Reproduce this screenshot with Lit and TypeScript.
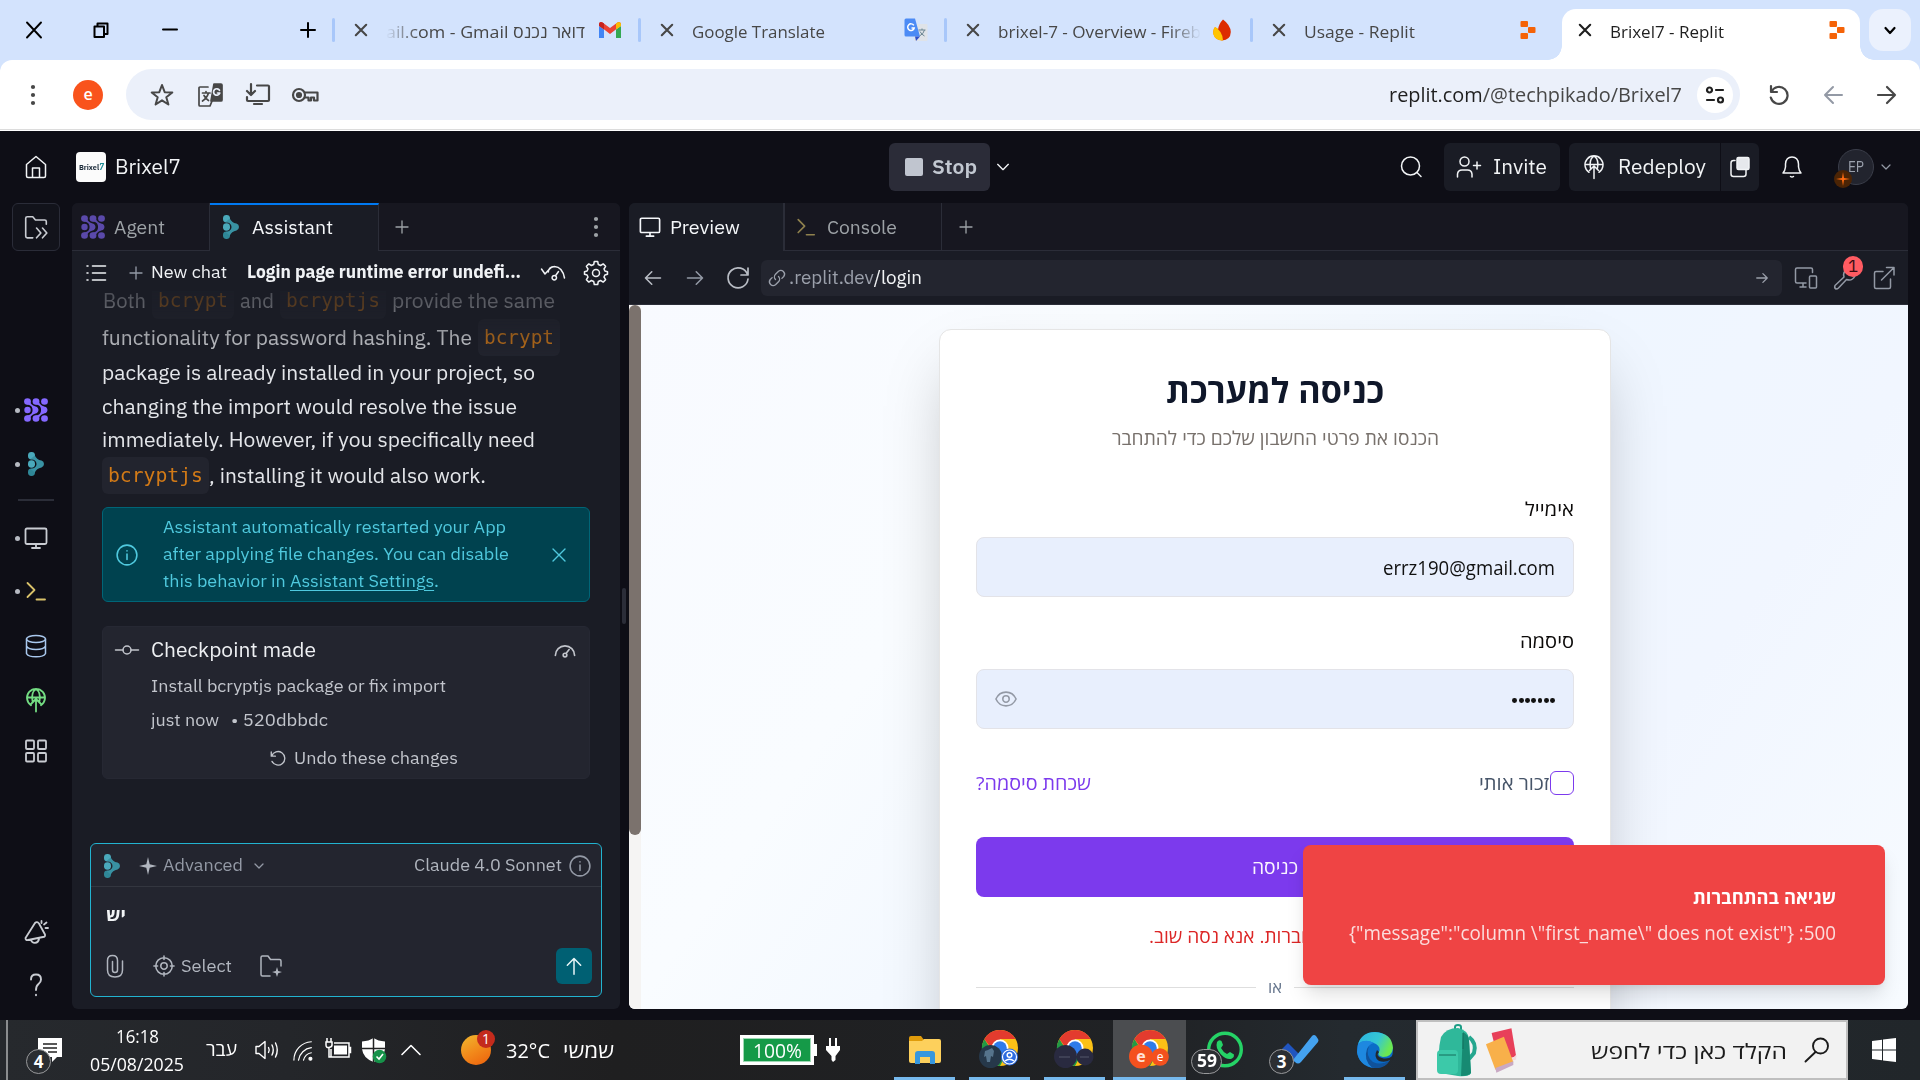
import { LitElement, html, svg, css, unsafeCSS } from "lit";
import { customElement, property } from "lit/decorators.js";

/** Text condensed or expanded horizontally to a given width. */
@customElement("fit-text")
class FitText extends LitElement {
  @property({ type: Number }) w = 0;
  @property({ type: Boolean, reflect: true }) rtl = false;
  static styles = css`
    :host { display: inline-flex; flex: none; direction: ltr; white-space: pre; line-height: 1.3; }
    span { display: inline-block; flex: none; transform-origin: 0 50%; }
    :host([rtl]) span { direction: rtl; }
  `;
  render() {
    return html`<span><slot></slot></span>`;
  }
  firstUpdated() {
    this.fit();
    document.fonts.ready.then(() => this.fit());
  }
  fit() {
    const span = this.renderRoot.querySelector("span") as HTMLElement;
    span.style.transform = "none";
    const natural = span.getBoundingClientRect().width;
    if (natural > 0 && this.w > 0) {
      this.style.width = `${this.w}px`;
      span.style.transform = `scaleX(${this.w / natural})`;
    }
  }
}

const spacing = unsafeCSS(
  Array.from({ length: 400 }, (_, i) => `.ml${i}{margin-left:${i}px}.mt${i}{margin-top:${i}px}`).join("")
);

const ico = (size: number, body: unknown, cls = "", stroke = 1.5, box = 24) => html`<svg
  class="ic ${cls}" width=${size} height=${size} viewBox="0 0 ${box} ${box}" fill="none"
  stroke="currentColor" stroke-width=${stroke} stroke-linecap="round" stroke-linejoin="round">${body}</svg>`;

const P = (d: string) => svg`<path d=${d}/>`;

const plus = P("M12 3V21M3 12H21");
const chevron = P("M4 8L12 16L20 8");
const kebab = svg`<g fill="currentColor" stroke="none"><circle cx="12" cy="4" r="2.1"/><circle cx="12" cy="12" r="2.1"/><circle cx="12" cy="20" r="2.1"/></g>`;
const monitor = P("M3 2.5H21Q22.5 2.5 22.5 4V16.5Q22.5 18 21 18H3Q1.5 18 1.5 16.5V4Q1.5 2.5 3 2.5ZM12 18V22M8 22H16");
const prompt = P("M3.5 4L10.5 11L3.5 18M12.5 20.5H21");
const gauge = P("M1.5 18A10.5 10.5 0 0 1 22.5 18M13.3 15.5L16.5 11.5M12 15.5A2 2 0 1 1 12 19.500A2 2 0 1 1 12 15.500");
const infoI = svg`<circle cx="12" cy="12" r="10.800"/><path d="M12 11V17M12 7.400V7.600"/>`;
const globeUp = P("M12 23.500V11M7.500 15.500L12 11L16.500 15.500M7 17.300A9 9 0 1 1 17 17.300M3 9.500H21M8.500 13C7.500 8 9 3 12 .8C15 3 16.500 8 15.500 13");
const arrowR = P("M3 12H21M13.500 4.500L21 12L13.500 19.500");
const arrowL = P("M21 12H3M10.500 4.500L3 12L10.500 19.500");
const undo = P("M3 4V9.500H8.500M3.600 9.300A9 9 0 1 1 4 16.500");
const agentI = svg`
  <g stroke="none" fill="#8468ff">
  <ellipse cx="3.500" cy="3.500" rx="3.400" ry="3.300"/><ellipse cx="12" cy="3.500" rx="3.400" ry="3.300"/><ellipse cx="20.500" cy="3.500" rx="3.400" ry="3.300"/>
  <ellipse cx="3.500" cy="12" rx="3.200" ry="3.200"/>
  <ellipse cx="3.500" cy="20.500" rx="3.400" ry="3.300"/><ellipse cx="12" cy="20.500" rx="3.400" ry="3.300"/><ellipse cx="20.500" cy="20.500" rx="3.400" ry="3.300"/></g>
  <g fill="#8468ff" stroke="none"><path d="M2 6C6 7 8 8 8.500 11V13C8 16 6 17 2 18L6 19.500C8 16.500 10 16 13 15Q16 12 13 9C10 8 8 7.500 6 4.500Z"/>
  <path d="M11 6C15 7 16.500 8 17 11V13C16.500 16 15 17 11 18L15 19.500C17 16.500 18.500 16 22 15Q25 12 22 9C18.500 8 17 7.500 15 4.500Z"/></g>`;
const assistI = svg`
  <g fill="#4aa9bb" stroke="none"><rect x="4" y="0" width="7" height="7.500" rx="3.400"/><rect x="4" y="8.300" width="7" height="7.400" rx="3.400"/><rect x="4" y="16.500" width="7" height="7.500" rx="3.400" fill="#2f8797"/>
  <path fill="#3992a3" d="M10.800 3.500C12 6 14 8 17.500 8.600Q20 9.500 20 12T17.500 15.400C14 16 12 18 10.800 20.500L6.500 17C10 16.500 12.500 15 12.500 12S10 7.500 6.500 7Z"/></g>`;

const replitI = html`<svg class="ic" width="24" height="24" viewBox="0 0 24 24" fill="#f56308"><rect x="4.500" y="3" width="7.500" height="6" rx="1"/><rect x="12" y="9" width="7.500" height="6" rx="1"/><rect x="4.500" y="15" width="7.500" height="6" rx="1"/></svg>`;
const gmailI = html`<svg class="ic" width="24" height="24" viewBox="0 0 24 24"><path fill="#4285f4" d="M1 20V8l5 3.500V20z"/><path fill="#34a853" d="M23 20V8l-5 3.500V20z"/><path fill="#ea4335" d="M1 7.500V6q.5-3 3.500-1.600L12 10l7.500-5.600Q22 3.200 23 6v1.500L12 16z"/><path fill="#fbbc04" d="M18 11.500V5.500l1.500-1.100Q22.500 3.200 23 6v2z"/><path fill="#c5221f" d="M6 11.500V5.500L4.500 4.400Q1.500 3.200 1 6v2z"/></svg>`;
const gtransI = html`<svg class="ic" width="24" height="24" viewBox="0 0 24 24"><rect x="10" y="6" width="13.500" height="17" rx="1" fill="#dfe3e8"/><path d="M14.500 12h7M18 10.500V12M20.500 12q-1 4-5 6M16 13.500q1.500 3 4.500 4.500" stroke="#6b8591" fill="none"/><path fill="#4c8bf5" d="M2 .5h9l5 18H2q-1.500 0-1.500-1.500V2Q.5.5 2 .5z"/><path fill="#3050c8" d="M11 18.500h5L12 23z"/><path d="M9.800 7.400A3.300 3.300 0 1 0 10.200 10H7.500" stroke="#fff" stroke-width="1.500" fill="none"/></svg>`;
const fireI = html`<svg class="ic" width="24" height="24" viewBox="0 0 24 24"><path fill="#ff9100" d="M5 9Q2.500 12 3.300 16 5 22 12 22.500L10 12z"/><path fill="#dd2c00" d="M13 1.500Q20.500 7 20.800 14 20.500 22 12 22.500 7 20 8 12 8.500 6 13 1.500z"/><path fill="#ffc400" d="M5 9q7.500 4 8 13.400Q5 22.500 3.300 16 2.700 12 5 9z"/></svg>`;

const chromeI = (a: unknown) => html`<svg class="ic" width="44" height="44" viewBox="-22 -20 44 44">
  <circle r="18" fill="#fbc116"/><path fill="#e33b2e" d="M-15.600-9A18 18 0 0 1 15.600-9L0-9 -4 0z"/><path fill="#229a45" d="M-15.600-9A18 18 0 0 0 0 18L7.500 4-7.500 4z"/><path fill="#e33b2e" d="M-15.600-9L0-9-7 3z"/>
  <circle r="8.500" fill="#fff"/><circle r="6.800" fill="#2f7bea"/>${a}</svg>`;

@customElement("app-root")
class AppRoot extends LitElement {
  static styles = [
    spacing,
    css`
      :host { display: block; width: 1920px; height: 1080px; overflow: hidden; background: #0e0e16; color: #f0f2f5;
        font-family: "IBM Plex Sans", "Noto Sans", "Open Sans", sans-serif; }
      * { box-sizing: border-box; }
      .row, .row > .grp { display: flex; align-items: center; }
      .col { display: flex; flex-direction: column; }
      .ic { display: block; flex: none; overflow: visible; }
      .push { margin-left: auto; }

      /* browser tabs */
      .strip { height: 60px; background: #d3e3fd; padding-left: 26px; color: #000; font: 17px "Open Sans", sans-serif; }
      .sep { width: 3px; height: 24px; background: #a8c7fa; border-radius: 2px; flex: none; }
      .sep.off { background: none; }
      .tab { width: 303px; height: 60px; padding: 0 16px 0 19px; color: #474747; flex: none; }
      .tab fit-text { margin: 5px 0 0 18px; }
      .tab .ic:last-child { margin-left: auto; }
      .fl { -webkit-mask-image: linear-gradient(90deg, transparent, #000 32px); mask-image: linear-gradient(90deg, transparent, #000 32px); }
      .fr { -webkit-mask-image: linear-gradient(270deg, transparent, #000 32px); mask-image: linear-gradient(270deg, transparent, #000 32px); }
      .tab.on { position: relative; width: 298px; height: 51px; margin: 9px 0 0 3px; background: #fff; border-radius: 14px 14px 0 0; padding: 0 11px 9px 16px; color: #1f1f1f; }
      .tab.on::before, .tab.on::after { content: ""; position: absolute; bottom: 0; width: 14px; height: 14px; }
      .tab.on::before { left: -14px; background: radial-gradient(circle at 0 0, transparent 13.500px, #fff 14px); }
      .tab.on::after { right: -14px; background: radial-gradient(circle at 100% 0, transparent 13.500px, #fff 14px); }
      .drop { width: 42px; height: 42px; border-radius: 14px; background: #ebf1fd; display: grid; place-items: center; margin-left: 9px; }

      /* browser toolbar */
      .barwrap { background: #d3e3fd; }
      .bar { height: 71px; background: #fff; border-radius: 12px 12px 0 0; color: #474747; font-family: "Open Sans", sans-serif; padding-bottom: 1px; border-bottom: 1px solid #fff; box-shadow: inset 0 -1px #dcdcdc; }
      .me { width: 30px; height: 30px; border-radius: 50%; background: #f9531c; color: #fff; display: grid; place-items: center; font-size: 16px; line-height: 1; font-weight: 600; padding-bottom: 2px; }
      .omni { width: 1614px; height: 51px; border-radius: 26px; background: #ebf0fa; padding-right: 7px; font-size: 20px; }
      .omni b { color: #1f1f1f; font-weight: 400; }
      .tune { width: 36px; height: 36px; border-radius: 50%; background: #fff; display: grid; place-items: center; color: #1f1f1f; }

      /* workspace header */
      .head { height: 72px; font-size: 20.500px; color: #f2f4f6; }
      .logo { width: 30px; height: 30px; border-radius: 4px; background: #fbfbfb; color: #1c2b3a; display: grid; place-items: center; font-weight: 800; font-size: 8px; }
      .logo i { color: #1d8c95; font-size: 9px; }
      .stop { margin-left: 708px; width: 101px; height: 48px; border-radius: 6px; background: #2b2c38; padding-left: 16px; color: #c2c8d1; font-weight: 600; }
      .sq { width: 18px; height: 18px; border-radius: 2px; background: #c0c5cf; }
      .hb { height: 48px; background: #1a1c25; border-radius: 6px; }
      .hb.l { border-radius: 6px 0 0 6px; }
      .hb.r { border-radius: 0 6px 6px 0; }
      .ep { position: relative; width: 36px; height: 36px; border-radius: 50%; background: #22242e; border: 1px solid #3a3d49; color: #9ba1ad; font-size: 14px; display: grid; place-items: center; }
      .badge { position: absolute; left: -5px; top: 20px; width: 18px; height: 18px; border-radius: 50%; background: #4b2405; color: #ff6a10; display: grid; place-items: center; }

      .work { display: flex; height: 817px; align-items: flex-start; }
      .side { width: 72px; height: 817px; color: #c9ccd2; flex: none; }
      .tog { width: 48px; height: 48px; margin-left: 12px; border: 1px solid #2a2c38; border-radius: 6px; background: #12131b; display: grid; place-items: center; flex: none; }
      .si { height: 24px; padding-left: 15px; flex: none; }
      .dot { width: 5px; height: 5px; border-radius: 50%; margin-right: 4px; flex: none; }
      .dot.on { background: #b6bac2; }
      .hr { width: 36px; height: 2px; background: #2b2d38; margin-left: 18px; flex: none; }
      .yel { color: #d9c26a; } .blu { color: #a9c8ee; } .grn { color: #74dd83; } .dim { color: #9399a5; }

      .panel { height: 806px; border-radius: 6px; background: #1a1c25; overflow: hidden; flex: none; }
      .panel.left { width: 548px; }
      .panel.right { width: 1279px; }
      .ptabs { height: 48px; font-size: 19.500px; color: #9da2a6; }
      .pt { height: 48px; background: #171720; border-bottom: 1px solid #2b2d38; border-right: 1px solid #2b2d38; flex: none; }
      .pt.on { background: #1a1c25; border-bottom: 0; color: #f5f7fa; }
      .pt.blue { border-top: 2px solid #0079f2; padding-bottom: 3px; width: 169px; }
      .pt.agent { width: 138px; }
      .pt.prev { width: 156px; border-right-width: 2px; }
      .pt.cons { width: 157px; }
      .pt.rest { flex: 1; border-right: 0; }
      .faded { opacity: .62; }
      .sub { height: 40px; padding: 3px 0 0 14px; font-size: 17.500px; color: #f0f2f5; }
      .b { font-weight: 700; }
      .chat { height: 552px; padding-left: 30px; overflow: hidden; }
      .msg { font-size: 20px; color: #e4e6ea; height: 204px; -webkit-mask-image: linear-gradient(180deg, rgba(0,0,0,.24), rgba(0,0,0,.32) 14px, #000 74px); mask-image: linear-gradient(180deg, rgba(0,0,0,.24), rgba(0,0,0,.32) 14px, #000 74px); overflow: hidden; flex: none; }
      .l37 { height: 37px; flex: none; } .l34 { height: 33.700px; flex: none; } .up { margin-top: -9px; }
      code { height: 37px; border-radius: 6px; background: #22242e; color: #d27a17; font: 19px "DejaVu Sans Mono", monospace; padding: 0 6px; display: flex; align-items: center; flex: none; }
      .note { width: 488px; height: 95px; margin-top: 12px; border: 1px solid #006577; border-radius: 6px; background: #00424f; color: #4fc9de; font-size: 17.500px; flex: none; padding-left: 13px; }
      .note u { text-underline-offset: 3px; }
      .note .t > div { height: 27px; display: flex; align-items: center; }
      .cp { width: 488px; height: 153px; margin-top: 24px; border-radius: 6px; background: #23252f; border: 1px solid #262833; color: #c2c5cc; font-size: 17.500px; padding: 6px 0 0 12px; flex: none; }
      .cp .big { font-size: 21px; color: #eef0f3; }
      .h34 { height: 34px; } .h39 { height: 39px; } .h28 { height: 28px; } .h48 { height: 48px; } .h54 { height: 54px; }
      .comp { width: 512px; height: 154px; margin-left: 18px; border: 1px solid #22b3d0; border-radius: 6px; background: #23252f; color: #b0b5be; font-size: 17.500px; }
      .ch { height: 43px; border-bottom: 1px solid #33363f; padding: 1px 0 0 9px; }
      .send { width: 36px; height: 36px; border-radius: 6px; background: #006073; color: #e8f6f8; display: grid; place-items: center; }
      .he { font-family: "Open Sans", "Liberation Sans", sans-serif; color: #f2f4f6; }

      .split { width: 9px; padding: 385px 0 0 2px; flex: none; }
      .split div { width: 4px; height: 36px; border-radius: 2px; background: #2b2d38; }

      .purl { height: 54px; border-bottom: 1px solid #2b2d38; padding-left: 14px; font-size: 19px; color: #b9bdc5; }
      .addr { width: 1021px; height: 36px; border-radius: 6px; background: #23252f; color: #9ba0ab; padding-left: 7px; }
      .addr b { color: #f2f4f6; font-weight: 400; }
      .wr { position: relative; }
      .cnt { position: absolute; left: 10px; top: -10px; width: 20px; height: 21px; border-radius: 10px; background: #ff5b62; color: #3a0d12; font-size: 17px; display: grid; place-items: center; line-height: 1; }

      .view { position: relative; height: 704px; display: flex; align-items: flex-start; overflow: hidden; font-family: "Open Sans", "Liberation Sans", sans-serif;
        background: linear-gradient(125deg, #f8faff 0%, #f9fcff 28%, #eff6ff 55%, #f1f6ff 75%, #f7fbff 100%); }
      .sb { width: 12px; height: 704px; background: #f5f4f3; flex: none; }
      .sb div { width: 12px; height: 530px; border-radius: 6px; background: #7b726d; }
      .card { width: 672px; height: 900px; margin: 24px 0 0 298px; flex: none; background: #fff; border: 1px solid #e5e5e5; border-radius: 12px; box-shadow: 0 31px 62px -15px rgba(0,0,0,.27); padding: 35px 36px; color: #0c0a09; font-size: 19px; }
      .card > .c { display: flex; justify-content: center; align-items: center; flex: none; }
      .lo fit-text { padding-top: 2px; }
      .ttl { height: 48px; font-size: 34px; font-weight: 700; color: #0f172a; }
      .gray { color: #78716c; } .vio { color: #7c3aed; } .slate { color: #475569; } .err { color: #dc2626; }
      .or { color: #64748b; font-size: 16px; }
      .h26 { height: 26px; flex: none; }
      .h24 { height: 24px; flex: none; }
      .end { display: flex; justify-content: flex-end; align-items: center; }
      .in { height: 60px; border: 1px solid #e3e3e8; border-radius: 8px; background: #e8effd; padding: 0 18px; display: flex; align-items: center; color: #111; flex: none; font-size: 20px; }
      .pw { display: flex; gap: 1.500px; margin-left: auto; }
      .pw i { width: 4.800px; height: 4.800px; border-radius: 50%; background: #111; margin-top: 3px; }
      .ck { width: 24px; height: 24px; border: 1px solid #7c3aed; border-radius: 6px; }
      .btn { height: 60px; border-radius: 8px; background: #7c3aed; color: #faf5ff; font-weight: 500; }
      .ln { flex: 1; height: 1px; background: #dedede; }
      .toast { position: absolute; left: 674px; top: 540px; width: 582px; height: 140px; background: #ef4444; border-radius: 8px; color: #fff; padding: 40px 49px 0 0; align-items: flex-end; font-size: 18.500px; box-shadow: 0 12px 20px -3px rgba(0,0,0,.13), 0 4px 8px -4px rgba(0,0,0,.1); }
      .toast .s { color: #fbdcdc; font-size: 19.500px; }

      /* taskbar */
      .task { height: 60px; background: linear-gradient(90deg, #26292d 0%, #24262a 15%, #1f1f20 32%, #202225 60%, #242a2f 70%, #21262a 100%); color: #fff; font: 18px "Open Sans", "Liberation Sans", sans-serif; }
      .tl { width: 2px; height: 60px; background: #8b8d8f; }
      .abs { position: relative; flex: none; }
      .bell { width: 38px; height: 60px; }
      .pill { position: absolute; left: 0; top: 29px; height: 25px; min-width: 25px; border-radius: 13px; border: 1px solid #98999b; background: #2b2e32; display: grid; place-items: center; font-size: 17px; font-weight: 700; line-height: 1; }
      .pill.wide { left: -3px; width: 31px; }
      .clock { width: 94px; align-items: center; gap: 4px; }
      .clock fit-text { line-height: 24px; }
      .f20 { font-size: 20px; padding-top: 2px; }
      .sun { width: 30px; height: 30px; border-radius: 50%; background: linear-gradient(150deg, #f0b92f, #f28a1b 50%, #ec5f0c); }
      .red { position: absolute; left: 16px; top: -5px; width: 18px; height: 18px; border-radius: 50%; background: #c42b1c; font-size: 14px; line-height: 17px; text-align: center; }
      .bat { width: 74px; height: 30px; border: 3px solid #fff; background: #159a48; box-shadow: inset 0 0 0 1px #9fd9b5; display: grid; place-items: center; font-size: 20px; }
      .nub { width: 3px; height: 12px; background: #fff; }
      .app { width: 61px; height: 60px; display: flex; align-items: center; justify-content: center; flex: none; position: relative; }
      .app.run { box-shadow: inset 0 -3px #76b9ed; }
      .app.act { width: 73px; background: #4b4d50; }
      .find { width: 432px; height: 60px; background: #f2f2f2; border: 2px solid #bfbfbf; color: #1b1b1b; font-size: 21px; }
      .find fit-text { padding-top: 3px; }
    `,
  ];

  tab(text: unknown, w: number, icon: unknown, cls = "", tcls = "", rtl = false) {
    return html`<div class="tab row ${cls}">
      ${ico(14, P("M1.800 1.800L12.200 12.200M12.200 1.800L1.800 12.200"), "", 2.1, 14)}
      <fit-text w=${w} ?rtl=${rtl} class=${tcls}>${text}</fit-text>${icon}</div>`;
  }

  side(mt: number, icon: unknown, on = false) {
    return html`<div class="si row mt${mt}"><span class="dot ${on ? "on" : ""}"></span>${icon}</div>`;
  }

  browser() {
    return html`
      <div class="strip row">
        ${ico(16, P("M1 0.500L15 15.500M15 0.500L1 15.500"), "", 1.9, 16)}
        ${ico(16, P("M1.500 4.500H11V15H1.500ZM4.500 4V1.500H14.500V12H11.500"), "ml51", 2, 16)}
        ${ico(16, P("M1 7.500H15"), "ml53", 2, 16)}
        ${ico(16, P("M8 1V15M1 8H15"), "ml122", 2, 16)}
        <span class="sep ml16"></span>
        ${this.tab("ail.com - Gmail דואר נכנס", 199, gmailI, "", "fl")}
        <span class="sep"></span>
        ${this.tab("Google Translate", 133, gtransI)}
        <span class="sep"></span>
        ${this.tab("brixel-7 - Overview - Fireb", 203, fireI, "", "fr")}
        <span class="sep"></span>
        ${this.tab("Usage - Replit", 111, replitI)}
        <span class="sep off"></span>
        ${this.tab("Brixel7 - Replit", 114, replitI, "on")}
        <div class="drop">${ico(12, P("M1.500 4L6 9L10.500 4"), "", 2.2, 12)}</div>
      </div>
      <div class="barwrap"><div class="bar row">
        ${ico(24, kebab, "ml21", 1.5)}
        <div class="me ml28">e</div>
        <div class="omni row ml23">
          ${ico(24, P("M12 2L14.700 9.200L22.300 9.500L16.300 14.200L18.400 21.500L12 17.300L5.600 21.500L7.700 14.200L1.700 9.500L9.300 9.200Z"), "ml24", 2)}
          ${ico(24, svg`<path d="M10 4H2Q1 4 1 5V22Q1 23 2 23H12L14 18"/><path d="M4.500 10H12M8 8.500V10M10.500 10Q9 15 4.500 18M6 12.500Q8 16 10.500 17.500"/><path fill="currentColor" d="M13 18L16 1H23Q24 1 24 2V17Q24 18 23 18Z"/><path stroke="#ebf0fa" stroke-width="1.700" d="M21.500 7.300A3.200 3.200 0 1 0 21.800 10H19.500"/>`, "ml24", 1.7)}
          ${ico(24, P("M11 2.500H22Q23 2.500 23 3.500V17Q23 18 22 18H2Q1 18 1 17V14M5 1V11.500M1 8L5 12L9 8M8 21H16"), "ml24", 2.2)}
          ${ico(28, svg`<circle cx="7" cy="14" r="6"/><circle cx="7" cy="14" r="2" fill="currentColor"/><path d="M13 11.500H25.500V19.500H22V16.500H19V19.500H16.500V16.500H13"/>`, "ml22", 2.2, 28)}
          <fit-text class="push" w="293"><b>replit.com</b>/@techpikado/Brixel7</fit-text>
          <div class="tune ml15">${ico(18, svg`<circle cx="3.500" cy="4" r="2.500"/><path d="M10 4H17M1 14H8"/><circle cx="14.500" cy="14" r="2.500"/>`, "", 2.2, 18)}</div>
        </div>
        ${ico(24, P("M4 3V9H10M4.500 8.500A8.500 8.500 0 1 1 3.800 14.500"), "ml27", 2.2)}
        ${ico(24, P("M21 12H4M12 4L4 12L12 20"), "ml30 dim", 2)}
        ${ico(24, P("M3 12H20M12 4L20 12L12 20"), "ml30", 2.2)}
      </div></div>`;
  }

  header() {
    return html`<div class="head row">
      ${ico(24, P("M2.500 9.500L12 1.500L21.500 9.500V21Q21.500 22.500 20 22.500H4Q2.500 22.500 2.500 21ZM8.500 22V13H15.500V22"), "ml24")}
      <div class="logo ml28"><fit-text w="25">Brixel<i>7</i></fit-text></div>
      <fit-text class="ml9" w="66">Brixel7</fit-text>
      <div class="stop row"><span class="sq"></span><fit-text class="ml9" w="45">Stop</fit-text></div>
      ${ico(16, chevron, "ml5", 2)}
      ${ico(24, svg`<circle cx="11.500" cy="11" r="9"/><path d="M18 17.500L22 21.500"/>`, "ml388")}
      <div class="hb row ml21"><span class="ml12"></span>${ico(24, P("M8.500 2A4.500 4.500 0 1 1 8.500 11A4.500 4.500 0 1 1 8.500 2M1.500 22V19Q2 15 6 15H11.500Q15.500 15 16 19V22M21 7V14M17.500 10.500H24.500"))}<fit-text class="ml13" w="54">Invite</fit-text><span class="ml13"></span></div>
      <div class="hb l row ml9"><span class="ml13"></span>${ico(24, globeUp)}<fit-text class="ml12" w="88">Redeploy</fit-text><span class="ml14"></span></div>
      <div class="hb r row ml1"><span class="ml7"></span>${ico(24, svg`<path d="M7 5.500H5.500Q3 5.500 3 8V19Q3 21.500 5.500 21.500H15.500Q18 21.500 18 19V15"/><rect x="9" y="2.500" width="12" height="12" rx="1.500" fill="#e6e8ec"/>`)}<span class="ml7"></span></div>
      ${ico(24, P("M3 18H21Q19 16 18.500 12V9Q18 2 12 2Q6 2 5.500 9V12Q5 16 3 18ZM10.500 21.500Q12 22.700 13.500 21.500"), "ml21")}
      <div class="ep ml34"><fit-text w="16">EP</fit-text><div class="badge">${ico(14, svg`<path fill="currentColor" stroke="none" d="M7 0L8 6L14 7L8 8L7 14L6 8L0 7L6 6Z"/>`, "", 1, 14)}</div></div>
      ${ico(12, chevron, "ml6 dim", 2.4)}
    </div>`;
  }

  sidebar() {
    return html`<div class="side col">
      <div class="tog">${ico(26, P("M9 22H4Q2.500 22 2.500 20.500V4Q2.500 2.500 4 2.500H9L11.500 5.500H20Q21.500 5.500 21.500 7V9.500M12.500 13L16.500 17.500L12.500 22M18 13L22 17.500L18 22"))}</div>
      ${this.side(147, ico(24, agentI), true)}
      ${this.side(30, ico(24, assistI), true)}
      <div class="hr mt23"></div>
      ${this.side(25, ico(24, monitor, "", 1.8), true)}
      ${this.side(29, ico(24, prompt, "yel", 1.8), true)}
      ${this.side(31, ico(24, svg`<ellipse cx="12" cy="5" rx="9.500" ry="3.500"/><path d="M2.500 5V19.500Q4 22.800 12 22.800T21.500 19.500V5M2.500 12Q4 15.500 12 15.500T21.500 12"/>`, "blu"))}
      ${this.side(30, ico(24, globeUp, "grn", 1.8))}
      ${this.side(27, ico(24, svg`<rect x="2" y="1.500" width="8" height="8.500" rx="1"/><rect x="14" y="1.500" width="8" height="8.500" rx="1"/><rect x="2" y="14" width="8" height="8.500" rx="1"/><rect x="14" y="14" width="8" height="8.500" rx="1"/>`, "", 1.8))}
      ${this.side(157, ico(24, P("M1.500 18L11 3Q13 1 15 3.500L21 14.500Q21.500 17 19 17L4 20Q1.500 20.500 1.500 18ZM7 20Q8 23 11 22.800Q14.500 22.500 15 19M17.500 3V1M20 4.500L22.500 2.500M21.500 8H24"), "", 1.8))}
      ${this.side(29, ico(24, P("M7 6.500Q7 1.500 12 1.500T17 6.500Q17 9 14.500 11Q12 13 12 17M12 21.800V22.200"), "", 1.9))}
    </div>`;
  }

  assistant() {
    const pill = (t: string, w: number, cls = "") => html`<code class=${cls}><fit-text w=${w}>${t}</fit-text></code>`;
    const line = (t: string, w: number) => html`<div class="row l34"><fit-text w=${w}>${t}</fit-text></div>`;
    return html`<div class="panel left">
      <div class="ptabs row">
        <div class="pt agent row">${ico(24, agentI, "ml9 faded")}<fit-text class="ml9" w="51">Agent</fit-text></div>
        <div class="pt on blue row">${ico(24, assistI, "ml9")}<fit-text class="ml9" w="81">Assistant</fit-text></div>
        <div class="pt rest row">${ico(16, plus, "ml15", 2)}${ico(24, kebab, "ml174")}</div>
      </div>
      <div class="sub row">
        ${ico(20, P("M1 3H2M1 10H2M1 17H2M6.500 3H19.500M6.500 10H19.500M6.500 17H19.500"), "", 1.6, 20)}
        ${ico(16, plus, "ml22 dim", 2)}
        <fit-text class="ml7" w="76">New chat</fit-text>
        <fit-text class="ml20 b" w="274">Login page runtime error undefi...</fit-text>
        ${ico(26, P("M8.300 12Q8.500 7 14.500 6.500Q22.500 7 24.500 18M1.500 9L5 14L9.500 9Q11 6.800 14.500 6.500M15.500 15.800L18.500 11.500M14.300 15.500A2.200 2.200 0 1 1 14.300 19.900A2.200 2.200 0 1 1 14.300 15.500"), "ml19", 1.5, 26)}
        ${ico(26, P("M10.300 1.500H13.700L14.300 4.500L16.600 5.500L19.200 3.900L21.600 6.300L20 9L20.900 11L23.500 11.700V14.300L20.900 15L20 17L21.600 19.700L19.200 22.100L16.600 20.500L14.300 21.500L13.700 24.500H10.300L9.700 21.500L7.400 20.500L4.800 22.100L2.400 19.700L4 17L3.100 15L.5 14.300V11.700L3.100 11L4 9L2.400 6.300L4.800 3.900L7.400 5.500L9.700 4.500ZM12 9.500A3.500 3.500 0 1 1 12 16.500A3.500 3.500 0 1 1 12 9.500"), "ml18", 1.5, 26)}
      </div>
      <div class="chat col">
        <div class="msg col">
          <div class="row l37 up"><fit-text class="ml1" w="43">Both</fit-text>${pill("bcrypt", 70, "ml6")}<fit-text class="ml6" w="34">and</fit-text>${pill("bcryptjs", 94, "ml6")}<fit-text class="ml6" w="163">provide the same</fit-text></div>
          <div class="row l37"><fit-text w="370">functionality for password hashing. The</fit-text>${pill("bcrypt", 70, "ml6")}</div>
          ${line("package is already installed in your project, so", 433)}
          ${line("changing the import would resolve the issue", 415)}
          ${line("immediately. However, if you specifically need", 433)}
          <div class="row l37">${pill("bcryptjs", 95)}<fit-text w="277">, installing it would also work.</fit-text></div>
        </div>
        <div class="note row">
          ${ico(22, infoI, "", 1.7)}
          <div class="t col ml25">
            <div><fit-text w="343">Assistant automatically restarted your App</fit-text></div>
            <div><fit-text w="346">after applying file changes. You can disable</fit-text></div>
            <div><fit-text w="276">this behavior in <u>Assistant Settings</u>.</fit-text></div>
          </div>
          ${ico(14, P("M1 1L13 13M13 1L1 13"), "ml43", 1.4, 14)}
        </div>
        <div class="cp">
          <div class="row h34">
            ${ico(24, svg`<circle cx="12" cy="12" r="4"/><path d="M0.500 12H8M16 12H23.500"/>`)}
            <fit-text class="big ml12" w="165">Checkpoint made</fit-text>
            ${ico(22, gauge, "ml238", 1.8)}
          </div>
          <div class="row ml36 h39"><fit-text w="295">Install bcryptjs package or fix import</fit-text></div>
          <div class="row ml36 h28"><fit-text w="68">just now</fit-text><fit-text class="ml12" w="97">• 520dbbdc</fit-text></div>
          <div class="row h48">${ico(18, undo, "ml154", 1.8)}<fit-text class="ml7" w="164">Undo these changes</fit-text></div>
        </div>
      </div>
      <div class="comp col">
        <div class="ch row">
          ${ico(24, assistI)}
          ${ico(18, svg`<path fill="currentColor" stroke="none" d="M9 0L10.700 7.300L18 9L10.700 10.700L9 18L7.300 10.700L0 9L7.300 7.300Z"/>`, "ml15", 1, 18)}
          <fit-text class="ml6 dim" w="80">Advanced</fit-text>
          ${ico(12, chevron, "ml10 dim", 2.6)}
          <fit-text class="ml149" w="148">Claude 4.0 Sonnet</fit-text>
          ${ico(22, infoI, "ml7 dim", 1.7)}
        </div>
        <div class="row h54"><fit-text class="he b ml15" w="20" rtl>יש</fit-text></div>
        <div class="row h48 mt1">
          ${ico(24, P("M19.500 7V16Q19.500 23 12 23T4.500 16V6.500Q4.500 1.500 9.500 1.500T14.500 6.500V16Q14.500 18.500 12 18.500T9.500 16V7.500"), "ml12", 1.5)}
          ${ico(22, P("M12 3A9 9 0 1 1 12 21A9 9 0 1 1 12 3M12 8.500A3.500 3.500 0 1 1 12 15.500A3.500 3.500 0 1 1 12 8.500M12 1V5M12 19V23M1 12H5M19 12H23"), "ml26", 1.7)}
          <fit-text class="ml6" w="51">Select</fit-text>
          ${ico(24, svg`<path d="M11 22H3.500Q2 22 2 20.500V3.500Q2 2 3.500 2H9L11.500 5.500H20.500Q22 5.500 22 7V12"/><path fill="currentColor" d="M18 13L19.200 17L23 18L19.200 19.200L18 23L16.800 19.200L13 18L16.800 17Z" stroke="none"/>`, "ml27")}
          <div class="send ml273">${ico(20, P("M12 22V3M4 11L12 3L20 11"), "", 1.8)}</div>
        </div>
      </div>
    </div>`;
  }

  preview() {
    return html`<div class="panel right">
      <div class="ptabs row">
        <div class="pt on prev row">${ico(22, monitor, "ml10", 1.8)}<fit-text class="ml9" w="70">Preview</fit-text></div>
        <div class="pt cons row">${ico(22, prompt, "ml10 yel faded", 1.8)}<fit-text class="ml10" w="70">Console</fit-text></div>
        <div class="pt rest row">${ico(16, plus, "ml16", 2)}</div>
      </div>
      <div class="purl row">
        ${ico(20, arrowL, "", 1.9)}${ico(20, arrowR, "ml22 dim", 1.9)}
        ${ico(24, P("M22 2V9H15M21.500 8.500A10 10 0 1 0 22 13"), "ml21", 1.7)}
        <div class="addr row ml11">
          ${ico(18, P("M10 14A5 5 0 0 1 10 7L14 3A5 5 0 0 1 21 10L18.500 12.500M14 10A5 5 0 0 1 14 17L10 21A5 5 0 0 1 3 14L5.500 11.500"), "", 1.8)}
          <fit-text class="ml3" w="133">.replit.dev<b>/login</b></fit-text>
          ${ico(14, arrowR, "push", 2.2)}<span class="ml13"></span>
        </div>
        ${ico(24, P("M12 17H3Q1.500 17 1.500 15.500V3.500Q1.500 2 3 2H17Q18.500 2 18.500 3.500V6.500M9 17V21M6 21H12M16.500 10H21.500Q22.500 10 22.500 11V21Q22.500 22 21.500 22H16.500Q15.500 22 15.500 21V11Q15.500 10 16.500 10"), "ml12 dim")}
        <div class="wr ml15">${ico(24, P("M14 3.500Q9.500 6 11 11L2 19.500Q1 22 3 23Q4.500 23 5.500 22L13.500 13.500Q19 15.500 22 10"), "dim")}<div class="cnt">1</div></div>
        ${ico(24, P("M11 5.500H4Q2.500 5.500 2.500 7V21Q2.500 22.500 4 22.500H17Q18.500 22.500 18.500 21V13M14.500 1.500H22V9M22 1.500L9.500 14"), "ml15 dim")}
      </div>
      <div class="view">
        <div class="sb"><div></div></div>
        <div class="card col">
          <div class="c ttl lo"><fit-text w="218" rtl>כניסה למערכת</fit-text></div>
          <div class="c h26 mt11 gray lo"><fit-text w="327" rtl>הכנסו את פרטי החשבון שלכם כדי להתחבר</fit-text></div>
          <div class="end h26 mt45 lo"><fit-text w="49" rtl>אימייל</fit-text></div>
          <div class="in mt16 lo"><fit-text class="push" w="172">errz190@gmail.com</fit-text></div>
          <div class="end h26 mt31"><fit-text w="54" rtl>סיסמה</fit-text></div>
          <div class="in mt15">${ico(22, P("M1 12Q4.500 4.500 12 4.500T23 12Q19.500 19.500 12 19.500T1 12ZM12 8.500A3.500 3.500 0 1 1 12 15.500A3.500 3.500 0 1 1 12 8.500"), "dim", 1.7)}<div class="pw"><i></i><i></i><i></i><i></i><i></i><i></i><i></i></div></div>
          <div class="row mt42 h24"><fit-text class="vio" w="115" rtl>שכחת סיסמה?</fit-text><fit-text class="push slate" w="70" rtl>זכור אותי</fit-text><span class="ck ml1"></span></div>
          <div class="c btn mt42"><fit-text w="46" rtl>כניסה</fit-text></div>
          <div class="c h26 mt26 err"><fit-text w="252" rtl>שגיאה בהתחברות. אנא נסה שוב.</fit-text></div>
          <div class="row h26 mt25 or"><span class="ln"></span><fit-text class="ml12" w="14" rtl>או</fit-text><span class="ln ml12"></span></div>
        </div>
        <div class="toast col">
          <fit-text class="b" w="143" rtl>שגיאה בהתחברות</fit-text>
          <fit-text class="s mt11" w="487" rtl>500: {"message":"column \\"first_name\\" does not exist"}</fit-text>
        </div>
      </div>
    </div>`;
  }

  taskbar() {
    return html`<div class="task row">
      <span class="tl ml6"></span>
      <div class="abs bell ml18">
        <svg class="ic" width="38" height="60" viewBox="0 0 38 60"><path fill="#fff" d="M12 18H36V37H31L26 42V37H12Z"/><path stroke="#222" stroke-width="1.500" d="M17 24H31M17 28H31M22 32H31"/></svg>
        <div class="pill">4</div>
      </div>
      <div class="clock col ml26"><fit-text w="43">16:18</fit-text><fit-text w="94">05/08/2025</fit-text></div>
      <fit-text class="ml22" w="31" rtl>עבר</fit-text>
      ${ico(24, P("M1 8.500H4L10 3.500V20.500L4 15.500H1ZM13.500 9.500Q15 12 13.500 14.500M17 7Q19.500 12 17 17M20.500 5Q24 12 20.500 19"), "ml18", 1.4)}
      ${ico(22, svg`<path d="M1 23A20 20 0 0 1 20 3M6 23A16 16 0 0 1 20 9.500M11.500 23A11 11 0 0 1 20 15"/><circle cx="19" cy="21.500" r="1.600" fill="currentColor"/>`, "ml14", 1.3)}
      <svg class="ic ml10" width="26" height="26" viewBox="0 0 26 26" fill="none" stroke="#fff" stroke-width="1.500"><path fill="#fff" stroke="none" d="M9 8.500H22V17.500H9Z"/><path d="M6 12V20H24V6H9M24 10.500H25.500V15.500H24M2 1V5M6 1V5M1 5H7V8Q7 10 4 10.500T1 8ZM4 10V20H6"/></svg>
      <svg class="ic ml10" width="26" height="26" viewBox="0 0 26 26"><path fill="#fff" d="M12.500 1Q17 4 24 4.500V12Q23 21 12.500 25Q2 21 1 12V4.500Q8 4 12.500 1Z"/><path stroke="#222" stroke-width="1.500" d="M12.500 1V25M1 11.500H24"/><circle cx="18.500" cy="19.500" r="6.800" fill="#169149"/><path fill="none" stroke="#fff" stroke-width="1.600" d="M15.500 19.500L18 22L22 17"/></svg>
      ${ico(20, P("M1 14.500L10 5.500L19 14.500"), "ml14", 1.6, 20)}
      <div class="abs ml40"><div class="sun"></div><div class="red">1</div></div>
      <fit-text class="ml15 f20" w="44">32°C</fit-text>
      <fit-text class="ml13 f20" w="51" rtl>שמשי</fit-text>
      <div class="bat ml126"><fit-text w="49">100%</fit-text></div><span class="nub"></span>
      <svg class="ic ml9" width="14" height="24" viewBox="0 0 14 24" fill="#fff"><path d="M3 0H5V8H9V0H11V8H14V12L9.500 18V22L7 24L5.500 22V18L0 12V8H3Z"/></svg>
      <div class="app run ml54"><svg class="ic" width="34" height="30" viewBox="0 0 34 30"><path fill="#e09c0b" d="M1 3Q1 1 3 1H13L16 5V9H1Z"/><path fill="#fdd05c" d="M1 6H14L16 4H31Q33 4 33 6V26Q33 28 31 28H3Q1 28 1 26Z"/><path fill="#3797dd" d="M7 29V19Q7 16 10 16H24Q27 16 27 19V29H22V22H12V29Z"/></svg></div>
      <div class="app run ml14">${chromeI(svg`<circle cx="-9.500" cy="8.500" r="11.500" fill="#26384a"/><path fill="#56748c" d="M-12 2L-8 0-6 3-7 9-9 8-10 14-13 14-14 8-16 9-15 3Z"/><circle cx="9.500" cy="9" r="8.500" fill="#2c6be0"/><circle cx="9.500" cy="9" r="7" fill="none" stroke="#fff" stroke-width="1.200"/><circle cx="9.500" cy="7" r="2.300" fill="none" stroke="#fff" stroke-width="1.500"/><path fill="none" stroke="#fff" stroke-width="1.500" d="M5 13Q9.500 9.500 14 13"/>`)}</div>
      <div class="app run ml14">${chromeI(svg`<circle cx="-9.500" cy="8.500" r="11.500" fill="#292a40"/><circle cx="10" cy="9" r="8.500" fill="#292a40"/><path stroke="#55566a" stroke-width="1.200" d="M-16 9H-5M5 9H14"/>`)}</div>
      <div class="app run act ml8">${chromeI(svg`<circle cx="-9" cy="8.500" r="12" fill="#f4511e"/><circle cx="10" cy="9" r="8.800" fill="#f4511e"/><text x="-9" y="14" text-anchor="middle" font-size="16" font-weight="700" fill="#ffe2d6">e</text><text x="10" y="13" text-anchor="middle" font-size="12" fill="#fff">e</text>`)}</div>
      <div class="app ml8"><svg class="ic" width="36" height="38" viewBox="0 0 36 38"><circle cx="18" cy="18.500" r="16.300" fill="none" stroke="#25d366" stroke-width="3.400"/><path fill="#25d366" d="M2 36L4 26L10 33Z"/><path fill="#25d366" d="M10 11Q12 8 14.500 10L16 14L14 17Q16 21 20 23L23 21L27 23.500Q27.500 26 25 27.500Q20 29.500 14 23.500Q8 17 10 11Z"/></svg><div class="pill wide"><fit-text w="20">59</fit-text></div></div>
      <div class="app ml14"><svg class="ic" width="38" height="32" viewBox="0 0 38 32"><path fill="#2055c0" d="M1 15L7 9L19 21L13 28Z"/><path fill="#44a2f0" d="M12 26L31 2Q33 0 35 2L37 5Q38 6 37 8L20 28Q17 31 14 28Z"/></svg><div class="pill">3</div></div>
      <div class="app run ml14"><svg class="ic" width="36" height="36" viewBox="0 0 36 36"><defs><linearGradient id="e1" x1="0" y1="0" x2="1" y2=".4"><stop offset="0" stop-color="#2bb2e0"/><stop offset=".6" stop-color="#35c7d4"/><stop offset="1" stop-color="#6be852"/></linearGradient></defs><circle cx="18" cy="18" r="18" fill="#0b6cc8"/><path fill="url(#e1)" d="M1 12Q5 0 18 0Q35 1 36 16Q35 25 26 25Q20 24 22 20Q24 15 19 12Q8 6 1 12Z"/><path fill="#10529b" d="M12 14Q8 24 16 30Q24 34 33 28Q28 37 18 36Q8 34 8 24Q8 16 12 14Z"/><path fill="#1e88e0" d="M1 12Q8 6 17 11Q12 12 10 17Q6 28 15 35.500Q2 33 0 20Z"/><path fill="#22282d" d="M22 20Q18 24 25 26Q31 28 37 23V27L33 28Q28 31 22 29Q16 25 20 18Z"/></svg></div>
      <div class="find row ml11">
        <svg class="ic ml18" width="42" height="54" viewBox="0 0 42 54"><path fill="none" stroke="#1d9c85" stroke-width="2" d="M19 9V4Q19 2 22 2T25 4V9"/><path fill="none" stroke="#25a78f" stroke-width="4" d="M33 14Q41 20 38 30L33 36"/><path fill="#2fb89a" d="M4 50Q1 30 5 14Q10 5 22 5Q32 7 33 16L35 50Q33 54 22 53Z"/><path fill="#178a72" d="M27 9Q33 12 33 18L35 50Q33 53 25 53Z"/><rect x="1" y="27" width="21" height="24" rx="4" fill="#3cc9a9"/><path stroke="#156e5c" d="M3 32H20M27 10V26"/></svg>
        <svg class="ic ml7" width="34" height="46" viewBox="0 0 36 46"><path fill="#e8405a" d="M7 5L28 0L33 30L14 34Z"/><path fill="#f3d9dd" d="M30 31L33 28V33L24 36Z"/><path fill="#f8b04a" d="M1 17L20 9L30 36L11 44Z"/><path fill="#c9a9c4" d="M11 42L30 35V39L12 47Z"/></svg>
        <fit-text class="push" w="196" rtl>הקלד כאן כדי לחפש</fit-text>
        ${ico(26, svg`<circle cx="16.500" cy="9" r="7.500"/><path d="M11.500 15L1.500 24.500"/>`, "ml17", 1.9, 26)}<span class="ml16"></span>
      </div>
      <svg class="ic ml24" width="24" height="24" viewBox="0 0 24 24" fill="#fff"><path d="M0 3L10 1.700V11.500H0ZM11 1.500L24 0V11.500H11ZM0 12.500H10V22.300L0 21ZM11 12.500H24V24L11 22.500Z"/></svg>
    </div>`;
  }

  render() {
    return html`${this.browser()}${this.header()}
      <div class="work">${this.sidebar()}${this.assistant()}<div class="split"><div></div></div>${this.preview()}</div>
      ${this.taskbar()}`;
  }
}
